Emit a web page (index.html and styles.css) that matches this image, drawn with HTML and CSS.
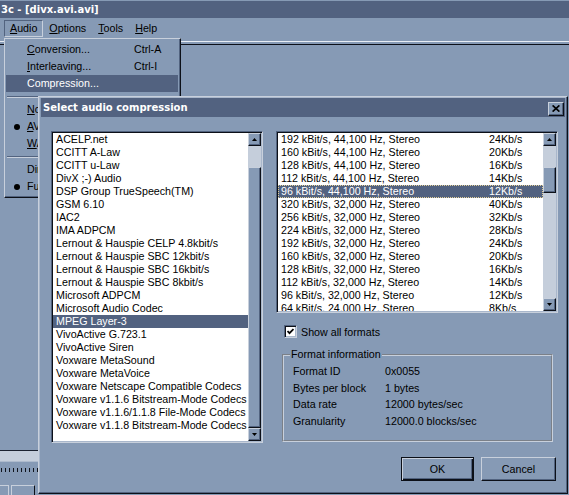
FILE: index.html
```html
<!DOCTYPE html>
<html>
<head>
<meta charset="utf-8">
<title>3c - [divx.avi.avi]</title>
<link rel="stylesheet" href="styles.css">
</head>
<body>
<div class="app">
  <div class="app-title">3c - [divx.avi.avi]</div>
  <div class="menubar">
    <span class="mb-item open"><u>A</u>udio</span>
    <span class="mb-item"><u>O</u>ptions</span>
    <span class="mb-item"><u>T</u>ools</span>
    <span class="mb-item"><u>H</u>elp</span>
  </div>
  <div class="toolbar-sep"></div>
  <div class="workspace"></div>
  <div class="bottom">
    <div class="trackbar"></div>
    <div class="ticks"></div>
    <div class="mini-btns"><span class="mini b1"></span><span class="mini b2"></span></div>
  </div>
</div>

<div class="menu">
  <div class="mi"><span class="bul"></span><span class="lbl"><u>C</u>onversion...</span><span class="sc">Ctrl-A</span></div>
  <div class="mi"><span class="bul"></span><span class="lbl"><u>I</u>nterleaving...</span><span class="sc">Ctrl-I</span></div>
  <div class="mi sel"><span class="bul"></span><span class="lbl">Compression...</span><span class="sc"></span></div>
  <div class="msep"></div>
  <div class="mi"><span class="bul"></span><span class="lbl"><u>N</u>o audio</span></div>
  <div class="mi radio"><span class="bul"></span><span class="lbl"><u>A</u>VI audio</span></div>
  <div class="mi"><span class="bul"></span><span class="lbl"><u>W</u>AV audio...</span></div>
  <div class="msep"></div>
  <div class="mi"><span class="bul"></span><span class="lbl">Direct stream copy</span></div>
  <div class="mi radio"><span class="bul"></span><span class="lbl">Full processing mode</span></div>
</div>

<div class="dialog">
  <div class="dlg-title">
    <span>Select audio compression</span>
    <span class="close"><svg width="8" height="7" viewBox="0 0 8 7"><path d="M0.6 0.4 L7.4 6.6 M7.4 0.4 L0.6 6.6" stroke="#000" stroke-width="1.7" fill="none"/></svg></span>
  </div>
  <div class="dlg-body">
    <div class="listbox codecs">
      <div class="rows">
        <div class="row">ACELP.net</div>
        <div class="row">CCITT A-Law</div>
        <div class="row">CCITT u-Law</div>
        <div class="row">DivX ;-) Audio</div>
        <div class="row">DSP Group TrueSpeech(TM)</div>
        <div class="row">GSM 6.10</div>
        <div class="row">IAC2</div>
        <div class="row">IMA ADPCM</div>
        <div class="row">Lernout &amp; Hauspie CELP 4.8kbit/s</div>
        <div class="row">Lernout &amp; Hauspie SBC 12kbit/s</div>
        <div class="row">Lernout &amp; Hauspie SBC 16kbit/s</div>
        <div class="row">Lernout &amp; Hauspie SBC 8kbit/s</div>
        <div class="row">Microsoft ADPCM</div>
        <div class="row">Microsoft Audio Codec</div>
        <div class="row sel">MPEG Layer-3</div>
        <div class="row">VivoActive G.723.1</div>
        <div class="row">VivoActive Siren</div>
        <div class="row">Voxware MetaSound</div>
        <div class="row">Voxware MetaVoice</div>
        <div class="row">Voxware Netscape Compatible Codecs</div>
        <div class="row">Voxware v1.1.6 Bitstream-Mode Codecs</div>
        <div class="row">Voxware v1.1.6/1.1.8 File-Mode Codecs</div>
        <div class="row">Voxware v1.1.8 Bitstream-Mode Codecs</div>
      </div>
      <div class="vscroll">
        <div class="sb-btn"><svg width="5" height="3" viewBox="0 0 5 3"><path d="M2.5 0 L5 3 L0 3 Z" fill="#000"/></svg></div>
        <div class="track t-top"></div>
        <div class="thumb grow"></div>
        <div class="sb-btn"><svg width="5" height="3" viewBox="0 0 5 3"><path d="M0 0 L5 0 L2.5 3 Z" fill="#000"/></svg></div>
      </div>
    </div>

    <div class="right">
      <div class="listbox formats">
        <div class="rows">
          <div class="row"><span>192 kBit/s, 44,100 Hz, Stereo</span><span>24Kb/s</span></div>
          <div class="row"><span>160 kBit/s, 44,100 Hz, Stereo</span><span>20Kb/s</span></div>
          <div class="row"><span>128 kBit/s, 44,100 Hz, Stereo</span><span>16Kb/s</span></div>
          <div class="row"><span>112 kBit/s, 44,100 Hz, Stereo</span><span>14Kb/s</span></div>
          <div class="row sel"><span>96 kBit/s, 44,100 Hz, Stereo</span><span>12Kb/s</span></div>
          <div class="row"><span>320 kBit/s, 32,000 Hz, Stereo</span><span>40Kb/s</span></div>
          <div class="row"><span>256 kBit/s, 32,000 Hz, Stereo</span><span>32Kb/s</span></div>
          <div class="row"><span>224 kBit/s, 32,000 Hz, Stereo</span><span>28Kb/s</span></div>
          <div class="row"><span>192 kBit/s, 32,000 Hz, Stereo</span><span>24Kb/s</span></div>
          <div class="row"><span>160 kBit/s, 32,000 Hz, Stereo</span><span>20Kb/s</span></div>
          <div class="row"><span>128 kBit/s, 32,000 Hz, Stereo</span><span>16Kb/s</span></div>
          <div class="row"><span>112 kBit/s, 32,000 Hz, Stereo</span><span>14Kb/s</span></div>
          <div class="row"><span>96 kBit/s, 32,000 Hz, Stereo</span><span>12Kb/s</span></div>
          <div class="row"><span>64 kBit/s, 24,000 Hz, Stereo</span><span>8Kb/s</span></div>
        </div>
        <div class="vscroll">
          <div class="sb-btn"><svg width="5" height="3" viewBox="0 0 5 3"><path d="M2.5 0 L5 3 L0 3 Z" fill="#000"/></svg></div>
          <div class="track t-top"></div>
          <div class="thumb small"></div>
          <div class="track grow"></div>
          <div class="sb-btn"><svg width="5" height="3" viewBox="0 0 5 3"><path d="M0 0 L5 0 L2.5 3 Z" fill="#000"/></svg></div>
        </div>
      </div>

      <div class="check-row">
        <span class="cbox"><svg width="7" height="7" viewBox="0 0 7 7"><path d="M0.5 3 L2.5 5.2 L6.5 1" stroke="#000" stroke-width="1.8" fill="none"/></svg></span>
        <span>Show all formats</span>
      </div>

      <fieldset class="group">
        <legend>Format information</legend>
        <div class="info">
          <span>Format ID</span><span>0x0055</span>
          <span>Bytes per block</span><span>1 bytes</span>
          <span>Data rate</span><span>12000 bytes/sec</span>
          <span>Granularity</span><span>12000.0 blocks/sec</span>
        </div>
      </fieldset>

      <div class="buttons">
        <button class="btn default">OK</button>
        <button class="btn">Cancel</button>
      </div>
    </div>
  </div>
</div>
</body>
</html>
```

FILE: styles.css
```css
* { box-sizing: border-box; }
html, body { margin: 0; padding: 0; }
body {
  width: 569px;
  height: 495px;
  overflow: hidden;
  position: relative;
  background: #869ab5;
  font-family: "Liberation Sans", Arial, sans-serif;
  font-size: 10.7px;
  color: #000;
}
u { text-underline-offset: 1px; }

/* main window */
.app { display: flex; flex-direction: column; height: 495px; }
.app-title {
  height: 17px;
  margin-top: 1px;
  background: #526280;
  color: #fff;
  font-family: "DejaVu Sans", sans-serif;
  font-weight: bold;
  font-size: 10px;
  line-height: 17px;
  padding-left: 1px;
  white-space: nowrap;
}
.menubar { display: flex; height: 22px; padding: 2px 0 0 4px; }
.mb-item {
  height: 17px;
  line-height: 15px;
  padding: 0 5px;
  border: 1px solid transparent;
  white-space: nowrap;
}
.mb-item.open { border-color: #52637f #c8d0dc #c8d0dc #52637f; }
.toolbar-sep {
  margin-top: 1px;
  height: 4px;
  border-top: 1px solid #e8edf4;
  border-bottom: 1px solid #0c1018;
}
.workspace { flex: 1; }
.bottom { height: 45px; display: flex; flex-direction: column; }
.trackbar {
  width: 38px;
  height: 12px;
  border-top: 1px solid #1c2230;
  border-bottom: 1px solid #aebbcd;
  background: #c5cedb;
}
.ticks {
  width: 38px;
  height: 4px;
  margin-top: 6px;
  background: repeating-linear-gradient(90deg, transparent 0 1px, #10141c 1px 2px, transparent 2px 4px);
}
.mini-btns { display: flex; gap: 2px; margin-top: 13px; height: 10px; }
.mini { height: 10px; border-top: 1px solid #c8d0dc; }
.mini.b1 { width: 9px; border-right: 1px solid #c8d0dc; }
.mini.b2 { width: 24px; border-left: 1px solid #c8d0dc; border-right: 1px solid #0c1018; }

/* dropdown menu */
.menu {
  position: absolute;
  left: 4px;
  top: 38px;
  width: 177px;
  z-index: 1;
  background: #869ab5;
  border: 1px solid;
  border-color: #c8d0dc #0c1018 #0c1018 #c8d0dc;
  box-shadow: inset -1px -1px 0 #52637f;
  padding: 2px 1px 2px 1px;
}
.mi {
  display: grid;
  grid-template-columns: 21px 107px auto;
  height: 17px;
  line-height: 17px;
  white-space: nowrap;
  margin-right: 1px;
}
.mi.sel { background: #526280; color: #fff; }
.bul { display: flex; align-items: center; justify-content: center; }
.mi.radio .bul::before {
  content: "";
  width: 6px;
  height: 6px;
  border-radius: 50%;
  background: #000;
}
.msep {
  height: 2px;
  margin: 4px 1px 3px;
  border-top: 1px solid #52637f;
  border-bottom: 1px solid #c8d0dc;
}

/* dialog */
.dialog {
  position: absolute;
  left: 38px;
  top: 96px;
  width: 530px;
  height: 398px;
  z-index: 2;
  background: #869ab5;
  border: 1px solid;
  border-color: #c8d0dc #0c1018 #0c1018 #c8d0dc;
  box-shadow: inset -1px -1px 0 #52637f, inset 1px 1px 0 #a9b7cb;
  padding: 1px 2px 2px 2px;
  display: flex;
  flex-direction: column;
}
.dlg-title {
  height: 19px;
  flex: none;
  background: #526280;
  color: #fff;
  display: flex;
  justify-content: space-between;
  align-items: center;
  padding: 0 1px 0 2px;
  font-family: "DejaVu Sans", sans-serif;
  font-weight: bold;
  font-size: 10px;
  white-space: nowrap;
}
.close {
  align-self: flex-start;
  margin-top: 4px;
  width: 16px;
  height: 14px;
  background: #869ab5;
  border: 1px solid;
  border-color: #c8d0dc #0c1018 #0c1018 #c8d0dc;
  box-shadow: inset -1px -1px 0 #52637f;
  display: flex;
  align-items: center;
  justify-content: center;
}
.close svg { display: block; margin: 0 1px 1px 0; }

.dlg-body {
  flex: 1;
  display: grid;
  grid-template-columns: 212px 282px;
  column-gap: 13px;
  padding: 14px 7px 0 10px;
  align-items: start;
}

.listbox {
  display: flex;
  background: #fff;
  border: 1px solid;
  border-color: #52637f #c8d0dc #c8d0dc #52637f;
  box-shadow: inset 1px 1px 0 #0c1018, inset -1px -1px 0 #a9b7cb;
  padding: 1px;
}
.codecs { height: 312px; }
.formats { height: 182px; }
.rows { flex: 1; min-width: 0; overflow: hidden; }
.row {
  height: 13px;
  line-height: 13px;
  padding-left: 3px;
  white-space: nowrap;
}
.row.sel { background: #526280; color: #fff; }
.formats .row { display: grid; grid-template-columns: 208px auto; }
.formats .row.sel { outline: 1px dotted #e2cf98; outline-offset: -1px; }

.vscroll {
  width: 13px;
  flex: none;
  display: flex;
  flex-direction: column;
  background: #c5cedb;
}
.sb-btn, .thumb {
  flex: none;
  background: #869ab5;
  border: 1px solid;
  border-color: #c8d0dc #0c1018 #0c1018 #c8d0dc;
  box-shadow: inset -1px -1px 0 #52637f;
}
.sb-btn {
  height: 13px;
  display: flex;
  align-items: center;
  justify-content: center;
}
.sb-btn svg { display: block; margin: 0 1px 1px 0; }
.track.t-top { height: 21px; flex: none; }
.grow { flex: 1; }
.thumb.small { height: 26px; }

.right { display: flex; flex-direction: column; }
.check-row {
  display: flex;
  align-items: center;
  gap: 4px;
  height: 13px;
  margin: 12px 0 0 8px;
  white-space: nowrap;
}
.cbox {
  width: 13px;
  height: 13px;
  flex: none;
  background: #fff;
  border: 1px solid;
  border-color: #52637f #c8d0dc #c8d0dc #52637f;
  box-shadow: inset 1px 1px 0 #0c1018, inset -1px -1px 0 #a9b7cb;
  display: flex;
  align-items: center;
  justify-content: center;
}
.cbox svg { display: block; }

.group {
  margin: 10px 5px 0 6px;
  border: 2px groove #c8d0dc;
  padding: 2px 0 10px 9px;
  min-width: 0;
}
.group legend {
  margin-left: -3px;
  padding: 0 1px;
  line-height: 13px;
}
.info {
  display: grid;
  grid-template-columns: 92px auto;
  line-height: 16.7px;
  white-space: nowrap;
}

.buttons {
  display: flex;
  justify-content: flex-end;
  gap: 7px;
  margin-top: 15px;
  padding-right: 2px;
}
.btn {
  width: 75px;
  height: 24px;
  padding: 0;
  font-family: inherit;
  font-size: 10.7px;
  color: #000;
  background: #869ab5;
  border: 1px solid;
  border-color: #c8d0dc #0c1018 #0c1018 #c8d0dc;
  box-shadow: inset -1px -1px 0 #52637f;
}
.btn.default {
  width: 73px;
  border: 1px solid #0c1018;
  box-shadow: inset 1px 1px 0 #c8d0dc, inset -1px -1px 0 #0c1018, inset -2px -2px 0 #52637f;
}
```
